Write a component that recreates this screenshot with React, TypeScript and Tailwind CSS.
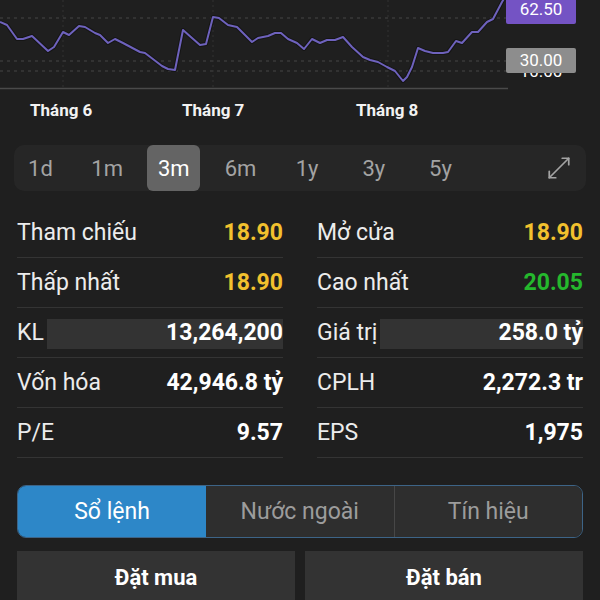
import React from "react";

const points =
  "0,22 7,25 17,39 23,39 32,36 48,51 54,47 63,32 69,35 79,26 85,27 95,33 100,35 108,43 115,39 123,43 140,52 145,53 162,66 168,69 175,70 183,30 192,38 200,45 206,44 213,17 219,18 228,25 237,27 252,42 258,38 268,36 275,33 281,33 288,39 297,43 304,49 312,39 320,43 327,40 335,40 343,37 352,47 363,57 370,60 378,62 387,67 395,71 403,81 407,77 412,67 418,48 425,51 433,53 443,53 448,52 456,41 462,43 472,32 478,32 487,22 493,19 502,2 505,-3";

const ranges = ["1d", "1m", "3m", "6m", "1y", "3y", "5y"];

type Stat = { label: string; value: string; color?: string; masked?: boolean };

const stats: Stat[][] = [
  [
    { label: "Tham chiếu", value: "18.90", color: "text-[#f2c12e]" },
    { label: "Mở cửa", value: "18.90", color: "text-[#f2c12e]" },
  ],
  [
    { label: "Thấp nhất", value: "18.90", color: "text-[#f2c12e]" },
    { label: "Cao nhất", value: "20.05", color: "text-[#25b82d]" },
  ],
  [
    { label: "KL", value: "13,264,200", masked: true },
    { label: "Giá trị", value: "258.0 tỷ", masked: true },
  ],
  [
    { label: "Vốn hóa", value: "42,946.8 tỷ" },
    { label: "CPLH", value: "2,272.3 tr" },
  ],
  [
    { label: "P/E", value: "9.57" },
    { label: "EPS", value: "1,975" },
  ],
];

function StatCell({ s }: { s: Stat }) {
  return (
    <div className="h-[50px] flex items-center border-b border-[#343434] pt-[2px]">
      <span className="text-[23px] text-[#ececec] whitespace-nowrap">{s.label}</span>
      {s.masked ? (
        <div className="flex-1 h-[30px] bg-[#333333] flex items-center justify-end ml-[3px]">
          <span className="text-[23px] font-bold text-white">{s.value}</span>
        </div>
      ) : (
        <span className={`ml-auto text-[23px] font-bold ${s.color ?? "text-white"}`}>{s.value}</span>
      )}
    </div>
  );
}

export default function App() {
  return (
    <div className="w-[600px] h-[600px] overflow-hidden bg-[#1f1f1f] font-['Roboto',sans-serif] text-white">
      {/* chart */}
      <div className="relative h-[95px]">
        <div className="absolute left-[8px] top-[-15px] text-[15px] leading-[18px]">
          <span className="text-[#dddddd]">Ref: </span>
          <span className="text-[#6f63c0]">62.50</span>
        </div>
        <svg width="600" height="95" className="absolute left-0 top-0">
          <g stroke="#3a3a3a" strokeWidth="1.5" strokeDasharray="3 4">
            <line x1="0" y1="18" x2="508" y2="18" />
            <line x1="0" y1="61" x2="508" y2="61" />
            <line x1="0" y1="71" x2="508" y2="71" />
          </g>
          <g stroke="#333333" strokeWidth="1" strokeDasharray="2 3">
            <line x1="63" y1="0" x2="63" y2="88" />
            <line x1="213" y1="0" x2="213" y2="88" />
            <line x1="388" y1="0" x2="388" y2="88" />
          </g>
          <line x1="0" y1="88.5" x2="508" y2="88.5" stroke="#4a4a4a" strokeWidth="1.5" />
          <polyline points={points} fill="none" stroke="#151515" strokeWidth="4" strokeLinejoin="round" />
          <polyline points={points} fill="none" stroke="#6e62bd" strokeWidth="2" strokeLinejoin="round" />
        </svg>
        <div className="absolute left-[512px] top-[63px] w-[58px] text-center text-[17px] leading-[17px] text-white">10.00</div>
        <div className="absolute left-[506px] top-[-4px] w-[70px] h-[28px] bg-[#7453c4] rounded-[2px] flex items-end justify-center pb-[2px] text-[17px] text-white">
          62.50
        </div>
        <div className="absolute left-[506px] top-[48px] w-[70px] h-[25px] bg-[#8d8d8d] rounded-[2px] flex items-center justify-center text-[17px] text-white">
          30.00
        </div>
      </div>

      {/* months */}
      <div className="relative h-[35px] text-[17px] font-bold text-[#f2f2f2]">
        <span className="absolute left-[30px] top-[3px]">Tháng 6</span>
        <span className="absolute left-[182px] top-[3px]">Tháng 7</span>
        <span className="absolute left-[356px] top-[3px]">Tháng 8</span>
      </div>

      {/* ranges */}
      <div className="mt-[15px] mx-[14px] h-[46px] rounded-[10px] bg-[#262626] flex items-center">
        <div className="flex gap-[13.67px] h-full">
          {ranges.map((r) => (
            <div
              key={r}
              className={`w-[53px] h-full flex items-center justify-center text-[22px] rounded-[6px] ${
                r === "3m" ? "bg-[#646464] text-white" : "text-[#a3a3a3]"
              }`}
            >
              {r}
            </div>
          ))}
        </div>
        <svg className="ml-auto mr-[14px]" width="26" height="26" viewBox="0 0 24 24" fill="none" stroke="#a3a3a3" strokeWidth="1.6" strokeLinecap="round" strokeLinejoin="round">
          <polyline points="15 3 21 3 21 9" />
          <polyline points="9 21 3 21 3 15" />
          <line x1="21" y1="3" x2="3" y2="21" />
        </svg>
      </div>

      {/* stats */}
      <div className="mt-[17px] px-[17px] grid grid-cols-2 gap-x-[34px]">
        {stats.map((row) => row.map((s) => <StatCell key={s.label} s={s} />))}
      </div>

      {/* tabs */}
      <div className="mt-[27px] mx-[17px] h-[53px] flex rounded-[9px] border border-[#3d6487] overflow-hidden text-[23px]">
        <div className="w-[188px] bg-[#2d87c8] flex items-center justify-center text-white pt-[2px]">Sổ lệnh</div>
        <div className="flex-1 bg-[#2e2e2e] flex items-center justify-center text-[#9c9c9c] border-r border-[#474747] pt-[2px]">Nước ngoài</div>
        <div className="flex-1 bg-[#2e2e2e] flex items-center justify-center text-[#9c9c9c] pt-[2px]">Tín hiệu</div>
      </div>

      {/* actions */}
      <div className="mt-[13px] px-[17px] flex gap-[10px]">
        <div className="flex-1 h-[52px] bg-[#333333] flex items-center justify-center text-[22px] font-bold text-white">Đặt mua</div>
        <div className="flex-1 h-[52px] bg-[#333333] flex items-center justify-center text-[22px] font-bold text-white">Đặt bán</div>
      </div>
    </div>
  );
}
